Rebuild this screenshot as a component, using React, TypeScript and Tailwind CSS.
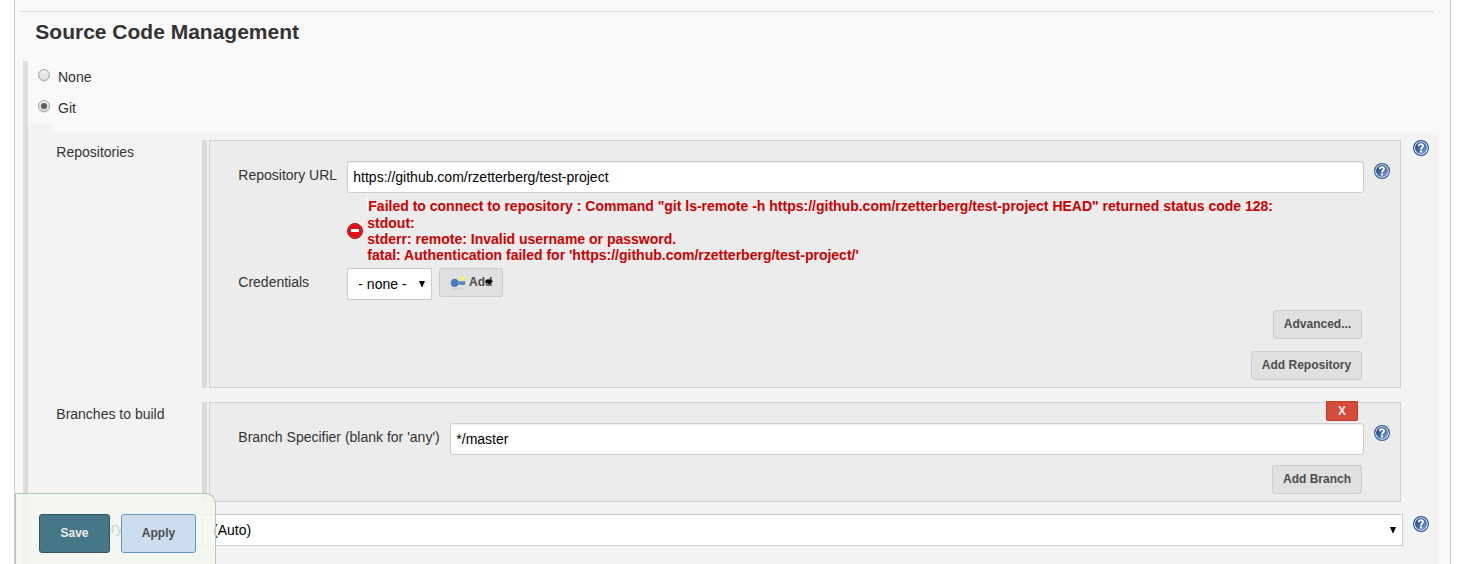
import type { ReactNode } from "react";

function HelpIcon({ className = "" }: { className?: string }) {
  return (
    <svg viewBox="0 0 16 16" className={`size-4 shrink-0 ${className}`}>
      <defs>
        <linearGradient id="help" x1="0" y1="0" x2="1" y2="1">
          <stop offset="0.3" stopColor="#2c5594" />
          <stop offset="1" stopColor="#86a9d8" />
        </linearGradient>
      </defs>
      <circle cx="8" cy="8" r="7.4" fill="#fff" stroke="#2f5a98" strokeWidth="1.2" />
      <circle cx="8" cy="8" r="6" fill="url(#help)" />
      <path d="M5.9 6.2V5.6C6 3.6 10 3.6 10 5.8C10 7.4 8 7.6 8 9.4" fill="none" stroke="#fff" strokeWidth="1.8" />
      <rect x="7" y="10.4" width="2" height="2" fill="#fff" />
    </svg>
  );
}

function ErrorIcon() {
  return (
    <svg viewBox="0 0 16 16" className="size-4 shrink-0">
      <circle cx="8" cy="8" r="7.5" fill="#dc0f12" stroke="#a80d10" />
      <circle cx="8" cy="8" r="6.6" fill="none" stroke="#e83b3b" strokeWidth="0.5" />
      <rect x="4" y="6" width="8" height="3" fill="#fff" />
    </svg>
  );
}

function KeyIcon() {
  return (
    <svg viewBox="0 0 16 16" className="size-4 shrink-0">
      <ellipse cx="8" cy="14.9" rx="6" ry="0.7" fill="#cccccc" />
      <path d="M5 7.2H15.2V10L14.2 11H13L12 10.4L11 11L10 10.4H6z" fill="#4a7fc0" />
      <ellipse cx="4.6" cy="8.9" rx="3.5" ry="3.8" fill="#4a7cba" stroke="#3b6399" strokeWidth="0.5" />
      <path d="M7 8.2H14.5" stroke="#7ba6da" strokeWidth="0.8" />
      <circle cx="12.6" cy="4.6" r="2.4" fill="#f7ee48" />
      <circle cx="12.6" cy="4.6" r="0.8" fill="#fffde0" />
    </svg>
  );
}

function Arrow({ className = "" }: { className?: string }) {
  return (
    <svg viewBox="0 0 6 6" className={`size-1.5 shrink-0 ${className}`}>
      <path d="M0 0H6L3.4 6H2.6z" fill="#000" />
    </svg>
  );
}

function Radio({ checked = false }: { checked?: boolean }) {
  return (
    <span className="flex size-3 items-center justify-center rounded-full border border-[#a6a6a6] bg-linear-to-b from-[#eeeeee] to-[#dcdcdc] shadow-[0_1px_1px_#0000001a]">
      {checked && <span className="size-1.5 rounded-full bg-[#5c5c5c]" />}
    </span>
  );
}

function Button({ children, className = "" }: { children: ReactNode; className?: string }) {
  return (
    <button className={`h-[29px] shrink-0 rounded-[3px] border border-[#cccccc] bg-[#e0e0e0] pb-px text-xs font-bold text-[#4d4d4d] ${className}`}>
      {children}
    </button>
  );
}

function Field({ value, className = "" }: { value: string; className?: string }) {
  return (
    <div className={`flex h-8 items-center rounded-[3px] border border-[#cccccc] bg-white pl-[5.3px] text-black shadow-[inset_0_1px_1px_#00000013] ${className}`}>
      {value}
    </div>
  );
}

function Section({ label, className, children }: { label: string; className: string; children: ReactNode }) {
  return (
    <div className={`flex pl-[5px] ${className}`}>
      <div className="w-[146px] shrink-0 pt-1 pl-[0.3px] leading-4">{label}</div>
      <div className="mr-0.5 w-[5px] shrink-0 bg-[#dadada]" />
      <div className="w-[1192px] shrink-0 border border-[#d2d2d2] bg-[#ececec] pl-7">{children}</div>
      {label === "Repositories" && <HelpIcon className="ml-3" />}
    </div>
  );
}

export default function App() {
  return (
    <div className="h-[564px] w-[1470px] overflow-hidden bg-white pl-3.5 font-['Liberation_Sans',Arial,sans-serif] text-sm text-[#333333]">
      <main className="h-full w-[1437px] border-x border-[#cccccc] bg-[#f9f9f9]">
        <div className="ml-[5px] h-3 w-[1414px] border-b border-[#dddddd]" />
        <h1 className="h-[49px] pt-2 pl-[20.3px] text-[21px] leading-6 font-bold">Source Code Management</h1>
        <div className="ml-2 flex h-[503px]">
          <div className="w-[5px] shrink-0 bg-[#e0e0e0]" />
          <div className="-ml-[3px]">
            <div className="flex h-[31px] items-start gap-2 pt-2 pl-[13px]">
              <Radio />
              <span className="leading-4">None</span>
            </div>
            <div className="flex h-[31px] items-start gap-2 pt-2 pl-[13px]">
              <Radio checked />
              <span className="leading-4">Git</span>
            </div>
            <div className="h-2.5 w-[26px] bg-[#00000006]" />
            <div className="w-[1414px] bg-[#00000006] pt-[7px] pl-[26px]">
              <Section label="Repositories" className="h-[248px]">
                <div className="flex pt-5">
                  <span className="w-[109px] shrink-0 pt-1.5 pl-[0.3px] leading-4">Repository URL</span>
                  <Field value="https://github.com/rzetterberg/test-project" className="w-[1017px]" />
                  <HelpIcon className="mt-0.5 ml-2.5" />
                </div>
                <div className="flex h-[75px] items-center pt-[1px] pl-[109px] font-bold text-[#cc0000]">
                  <ErrorIcon />
                  <div className="mb-0.5 ml-1 leading-4 whitespace-nowrap">
                    <div className="mb-px border-l border-white pl-[0.3px]">
                      Failed to connect to repository : Command "git ls-remote -h https://github.com/rzetterberg/test-project HEAD" returned status code 128:
                    </div>
                    <div className="pl-[0.3px]">stdout:</div>
                    <div className="pl-[0.3px]">stderr: remote: Invalid username or password.</div>
                    <div className="pl-[0.3px]">fatal: Authentication failed for 'https://github.com/rzetterberg/test-project/'</div>
                  </div>
                </div>
                <div className="flex items-start">
                  <span className="w-[109px] shrink-0 pt-1.5 pl-[0.3px] leading-4">Credentials</span>
                  <div className="mr-[7px] flex h-8 w-[85px] items-center justify-between border border-[#cccccc] bg-white pr-1.5 pl-[10.3px] text-black">
                    <span>- none -</span>
                    <Arrow />
                  </div>
                  <Button className="flex w-16 items-center pl-2.5">
                    <KeyIcon />
                    <span className="ml-[3px]">Add</span>
                    <svg viewBox="0 0 8 6" className="-ml-[7px] h-1.5 w-2 shrink-0">
                      <path d="M1 1H5V0L8 2.5L5 4.5L4 6L2.5 4L0 3z" fill="#000" />
                    </svg>
                  </Button>
                </div>
                <div className="flex flex-col items-end gap-3 pt-2.5 pr-[38px]">
                  <Button className="w-[89px]">Advanced...</Button>
                  <Button className="w-[111px]">Add Repository</Button>
                </div>
              </Section>
              <Section label="Branches to build" className="mt-3.5 h-[100px]">
                <div className="-mt-0.5 flex justify-end pr-[42px]">
                  <button className="h-5 w-8 rounded-b-xs border border-[#b83b2c] bg-[#d54c3c] text-xs leading-4 font-bold text-[#eeeeee]">X</button>
                </div>
                <div className="flex pt-0.5">
                  <span className="w-[212px] shrink-0 pt-1.5 pl-[0.3px] leading-4">Branch Specifier (blank for 'any')</span>
                  <Field value="*/master" className="w-[914px]" />
                  <HelpIcon className="mt-0.5 ml-2.5" />
                </div>
                <div className="flex justify-end pt-2.5 pr-[38px]">
                  <Button className="w-[90px]">Add Branch</Button>
                </div>
              </Section>
              <div className="flex h-[62px] pt-3 pl-[5px]">
                <span className="w-[146px] shrink-0 pt-1.5 leading-4">Repository browser</span>
                <div className="flex h-8 w-[1201px] items-center justify-between border border-[#cccccc] bg-white pr-1.5 pl-2.5 text-black">
                  <span>(Auto)</span>
                  <Arrow />
                </div>
                <HelpIcon className="mt-0.5 ml-2.5" />
              </div>
            </div>
          </div>
        </div>
      </main>
      <div className="fixed bottom-0 left-[15px] flex h-[71px] w-[201px] gap-[11px] rounded-tr-[10px] border border-b-0 border-[#adc9b8] bg-[#f4f8eecc] pt-5 pl-[23px] text-xs font-bold">
        <button className="h-[39px] w-[71px] rounded-[3px] border border-[#2f5667] bg-[#457787] pb-0.5 text-[#eeeeee]">Save</button>
        <button className="h-[39px] w-[75px] rounded-[3px] border border-[#5f96d0] bg-[#ccdded] pb-0.5 text-[#4d4d4d]">Apply</button>
      </div>
    </div>
  );
}
